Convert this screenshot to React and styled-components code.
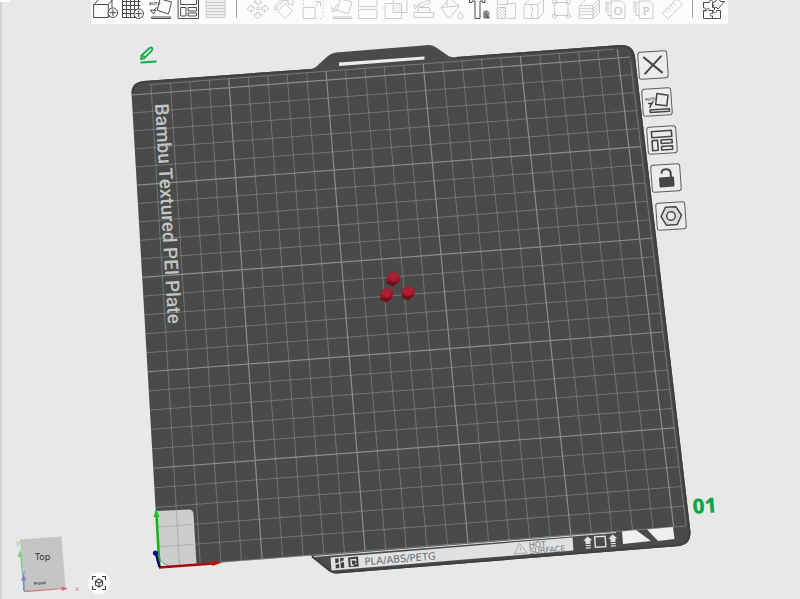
import React from "react";
import styled, { createGlobalStyle } from "styled-components";

const GlobalStyle = createGlobalStyle`
  body {
    margin: 0;
    background: #e8e8e8;
    font-family: "Noto Sans", sans-serif;
  }
`;

const Page = styled.main`
  display: flex;
  flex-direction: column;
  min-height: 100vh;
  box-shadow: inset 2px 0 #d2d2d2;
`;

const Header = styled.header`
  display: flex;
  justify-content: space-between;
  padding-right: 9%;
`;

const CornerTab = styled.div`
  width: 10px;
  height: 2px;
  border-radius: 0 0 3px 0;
  background: #fff;
`;

const Toolbar = styled.div`
  display: grid;
  grid-template-columns: 5fr auto 16fr auto 1fr;
  width: 87.5%;
  height: 24px;
  background: #fcfcfc;
`;

const ToolGroup = styled.div`
  display: flex;
`;

const ToolButton = styled.button`
  flex: 1;
  display: flex;
  justify-content: center;
  min-width: 0;
  height: 24px;
  padding: 0;
  border: 0;
  background: none;
  color: ${({ disabled }) => (disabled ? "#cbcbcb" : "#4c4c4c")};

  svg {
    flex: none;
    width: 26px;
    height: 24px;
  }
`;

const Separator = styled.div`
  width: 1px;
  height: 18px;
  margin: 0 7px;
  background: #a2a2a2;
`;

const Stage = styled.section`
  position: relative;
`;

const Scene = styled.svg`
  display: block;
  width: 100%;
`;

const FloatingButton = styled.button`
  position: absolute;
  left: ${({ $x }) => ($x / 800) * 100}%;
  top: ${({ $y }) => (($y - 24) / 575) * 100}%;
  width: ${({ $size }) => $size}px;
  height: ${({ $size }) => $size}px;
  display: flex;
  align-items: center;
  justify-content: center;
  padding: 0;
  border: 0;
  background: none;
  transform: translate(-50%, -50%);
`;

const PlateButton = styled(FloatingButton)`
  height: 28px;
  border: 1px solid #5a5c5b;
  border-radius: 3px;
  background: #ececec;
  color: #454746;
  transform: translate(-50%, -50%) rotate(-4deg);

  svg {
    flex: none;
    width: 26px;
    height: 24px;
  }
`;

const FitButton = styled(FloatingButton)`
  border-radius: 50%;
  background: #fff;
  color: #444;
`;

const Icon = ({ children, width = 1 }) => (
  <svg
    viewBox="0 0 26 24"
    fill="none"
    stroke="currentColor"
    strokeWidth={width}
    strokeLinejoin="round"
    strokeLinecap="round"
    aria-hidden="true"
  >
    {children}
  </svg>
);

const Plus = ({ x, y }) => (
  <>
    <circle cx={x} cy={y} r="4.8" fill="#fcfcfc" />
    <path d={`M${x - 3} ${y}h6M${x} ${y - 3}v6`} />
  </>
);

const ListIcon = ({ letter }) => (
  <Icon>
    <path d="M17 1H8v17.500h14V4.500L18.500 1z" />
    <path d="M8 3H5v12.500h3M5 2H3v10" />
    <text
      x="15"
      y="15"
      fontSize="12"
      textAnchor="middle"
      fontFamily="Liberation Serif, serif"
      strokeWidth="0.300"
      fill="currentColor"
    >
      {letter}
    </text>
  </Icon>
);

const fileTools = [
  {
    name: "Add",
    icon: (
      <Icon>
        <path d="M2 4.500h14.300v13H2zM2 4.500L7 -1M16.300 4.500L21 -1M16.300 17.500l1.500-1.500M20 0v7" />
        <Plus x={20.9} y={12.7} />
      </Icon>
    ),
  },
  {
    name: "Add plate",
    icon: (
      <Icon>
        <path d="M3.500-1v18.500M7.500-1v18.500M11.500-1v18.500M15.500-1v18.500M19.500-1v18.500M3.500 1.500h17.500M3.500 5.500h17.500M3.500 9.500h17.500M3.500 13.500h17.500M3.500 17.500h17.500" />
        <Plus x={19.7} y={13.7} />
      </Icon>
    ),
  },
  {
    name: "Auto orient",
    icon: (
      <Icon>
        <text x="2" y="5" fontSize="4" fontWeight="700" stroke="none" fill="currentColor">
          AUTO
        </text>
        <path d="M13.500-1l11 3-3 12-11-3.500zM3.500 10.500l3 3.500 2-3.500zM7 10l3-2.500M5 17h18.500v1.500H5z" />
      </Icon>
    ),
  },
  {
    name: "Arrange",
    icon: (
      <Icon>
        <path d="M3.500-3h20v21.500h-20zM6-1h15.500v5.500H6zM6 7.500h5v8.500H6zM13.500 7.500h8V11h-8zM13.500 13h8v3h-8z" />
      </Icon>
    ),
  },
  {
    name: "Layer height",
    disabled: true,
    icon: (
      <Icon>
        <path
          d="M4.500-1h18.500v18.500H4.500zM4.500 2.500H23M4.500 5.500H23M4.500 8.500H23M4.500 11.500H23M4.500 14.500H23"
          fill="#efefef"
        />
      </Icon>
    ),
  },
];

const modelTools = [
  {
    name: "Move",
    disabled: true,
    icon: (
      <Icon>
        <circle cx="13" cy="8.500" r="1.500" />
        <path d="M13-1.500l4 4h-2.500v2h-3v-2H9zM13 18.500l4-4h-2.500v-2h-3v2H9zM2.500 8.500l4-3.500v2h2.500v3H6.500v2zM23.500 8.500l-4-3.500v2H17v3h2.500v2z" />
      </Icon>
    ),
  },
  {
    name: "Rotate",
    disabled: true,
    icon: (
      <Icon>
        <path d="M13.500 4l7 6.500-7.500 8-7-7z" />
        <path d="M3 9.500C3 4 7 0 12 0l4 1M4.500 10c0-4 3-7 7.500-8M3 9.500h1.500M16-1.500V4l5 1V-1" />
      </Icon>
    ),
  },
  {
    name: "Scale",
    disabled: true,
    icon: (
      <Icon>
        <path d="M3.500 7.500H15v11H3.500zM15.500 6.500l4-4.500M16 1.500h4.500V6" />
        <path d="M3.500 5V0M23 0v18.500h-6" strokeDasharray="1 3" />
      </Icon>
    ),
  },
  {
    name: "Lay on face",
    disabled: true,
    icon: (
      <Icon>
        <path d="M13-1l11 3-3.500 11.500L9.500 10.500zM3.500 8l1 4 4-2zM6 9l3-4M5.500 17H24v1.500H5.500z" />
      </Icon>
    ),
  },
  {
    name: "Cut",
    disabled: true,
    icon: (
      <Icon>
        <path d="M4-2h18v8.500H4zM4 9.500h18v9H4z" />
      </Icon>
    ),
  },
  {
    name: "Mesh boolean",
    disabled: true,
    icon: (
      <Icon>
        <path d="M2.500 3.500h16v15h-16zM10.500-2H24v14.500H10.500z" />
        <path d="M10.500 7l4-3.500M10.500 10l7-6.500M11.500 12l7-6.500M14.500 12l4-3.500" strokeWidth="0.700" />
      </Icon>
    ),
  },
  {
    name: "Supports",
    disabled: true,
    icon: (
      <Icon>
        <path d="M4.500 12.500h19v5h-19zM9 7.500h10l1.500 5H7.500zM9 4l10-4 1 2.500-9 4.500zM4 5l1 4 3-3z" />
      </Icon>
    ),
  },
  {
    name: "Color painting",
    disabled: true,
    icon: (
      <Icon>
        <path d="M3.500 7.500L12-2l9 8-8.500 11c-1 1-2 1-3 0zM3.500 7.500L21 6M9-1v7M22.500 11.500c-1.500 2.500-2.500 3.500-2.500 5a2.500 2.500 0 005 0c0-1.500-1-2.500-2.500-5z" />
      </Icon>
    ),
  },
  {
    name: "Text shape",
    icon: (
      <Icon>
        <path d="M3.500-2v4.500h2.500V1h3v17.500h5V1h2.500v1.500H19V-2" />
        <text
          x="17"
          y="18"
          fontSize="12"
          fontWeight="700"
          fontFamily="Roboto, sans-serif"
          strokeWidth="0.800"
        >
          a
        </text>
      </Icon>
    ),
  },
  {
    name: "Variable layer",
    disabled: true,
    icon: (
      <Icon>
        <path d="M4.500 7.500h8v11h-8zM4.500 4.500V-1M14.500 3.500h8v15h-8M14.500 3.500V-1M4.500 4.500h10" />
        <path
          d="M4.500 9.500l2-2M4.500 12.500l5-5M4.500 15.500l8-8M5 18l7.500-7.500M8 18l4.500-4.500M11 18l1.500-1.500"
          strokeWidth="0.800"
        />
      </Icon>
    ),
  },
  {
    name: "Split to objects",
    disabled: true,
    icon: (
      <Icon>
        <path d="M3.500 4.500H17v14H3.500zM3.500 4.500L9-1M17 4.500L22.500-1M17 18.500l5.500-6V-1M11 4.500c-2 3 2 4 0 7s1 4-1 7" />
      </Icon>
    ),
  },
  {
    name: "Split to parts",
    disabled: true,
    icon: (
      <Icon>
        <path d="M7 2.500h13v13H7z" />
        <circle cx="6.500" cy="2" r="2.200" />
        <circle cx="20.500" cy="2" r="2.200" />
        <circle cx="6.500" cy="16" r="2.200" />
        <circle cx="20.500" cy="16" r="2.200" />
      </Icon>
    ),
  },
  {
    name: "Slice view",
    disabled: true,
    icon: (
      <Icon>
        <path d="M3.500 5.500H17v13H3.500zM3.500 5.500L10-1M17 5.500l6.500-6M17 18.500l6.500-6V-1M17 9l6.500-6M17 12l6.500-6M17 15l6.500-6" />
        <path d="M3.500 9l2-1 2 1 2-1 2 1 2-1 3.500 1M3.500 12l2-1 2 1 2-1 2 1 2-1 3.500 1M3.500 15l2-1 2 1 2-1 2 1 2-1 3.500 1" />
      </Icon>
    ),
  },
  { name: "Object list", disabled: true, icon: <ListIcon letter="O" /> },
  { name: "Part list", disabled: true, icon: <ListIcon letter="P" /> },
  {
    name: "Measure",
    disabled: true,
    icon: (
      <Icon>
        <path d="M3.500 13L18-1l5.500 5.500L9 18.500zM6.500 10.500l2 2M9 8l3 3M11.500 5.500l2 2M14 3l3 3" />
      </Icon>
    ),
  },
];

const assemblyTools = [
  {
    name: "Assembly view",
    icon: (
      <Icon>
        <path d="M2.500 2.500h6c-1-3 4-3 3 0h0v5c3-1 3 4 0 3M2.500 2.500v5.500c3-1 3 4 0 3v7.500h17v-8h-4c1 3-4 3-3.500 0H8c1-3-3-3-2.500 0h-3M11.500 11v2.500c-3-1-3 3.500 0 2.500v2.500M12 3l5-4M17-1l3 2.500M20 1.500l3.500 0-6.500 7.500-2-2c-2 1.500-4-1-2-2.500" />
      </Icon>
    ),
  },
];

const plateTools = [
  {
    name: "Delete plate",
    x: 653,
    y: 65,
    icon: (
      <Icon width={2}>
        <path d="M4.500 4l17 16M21.500 4l-17 16" />
      </Icon>
    ),
  },
  {
    name: "Auto orient plate",
    x: 657,
    y: 102,
    icon: (
      <Icon width={1.5}>
        <text x="1" y="10" fontSize="4" fontWeight="700" stroke="none" fill="currentColor">
          AUTO
        </text>
        <path d="M13.500 3.500l11 2.500-2 10.500-11-2zM4.500 13h3l-2 4M6 15.500L9 11.500M5.500 19.500H25V22H5.500z" />
      </Icon>
    ),
  },
  {
    name: "Arrange plate",
    x: 662,
    y: 140,
    icon: (
      <Icon width={1.6}>
        <path d="M3 3h20v6H3zM3 12h5.500v10H3zM12 12h11v3.500H12zM12 18.500h11V22H12z" />
      </Icon>
    ),
  },
  {
    name: "Lock plate",
    x: 666,
    y: 178,
    icon: (
      <Icon width={2}>
        <path d="M9 6.500c0-4 8-4.500 9 0v5" />
        <path d="M7 12h13v8H7z" fill="currentColor" />
      </Icon>
    ),
  },
  {
    name: "Plate settings",
    x: 671,
    y: 216,
    icon: (
      <Icon width={1.5}>
        <path d="M8 3h10.500l5 9-5 9H8l-5-9z" fill="#dcdcdc" />
        <circle cx="13" cy="12" r="4.300" fill="#ececec" />
      </Icon>
    ),
  },
];

// screen positions of the plate corners at (0,0), (256,0), (256,250), (0,250) mm
const corners = [
  [159, 567],
  [686, 526],
  [630, 57],
  [132, 95],
];

const project = (() => {
  const [[x0, y0], [x1, y1], [x2, y2], [x3, y3]] = corners;
  const dx1 = x1 - x2;
  const dx2 = x3 - x2;
  const dy1 = y1 - y2;
  const dy2 = y3 - y2;
  const sx = x0 - x1 + x2 - x3;
  const sy = y0 - y1 + y2 - y3;
  const det = dx1 * dy2 - dx2 * dy1;
  const g = (sx * dy2 - dx2 * sy) / det;
  const h = (dx1 * sy - sx * dy1) / det;
  return (mx, my) => {
    const u = mx / 256;
    const v = my / 250;
    const w = g * u + h * v + 1;
    return [
      ((x1 - x0 + g * x1) * u + (x3 - x0 + h * x3) * v + x0) / w,
      ((y1 - y0 + g * y1) * u + (y3 - y0 + h * y3) * v + y0) / w,
    ];
  };
})();

const segment = (ax, ay, bx, by) =>
  "M" + project(ax, ay).join(" ") + "L" + project(bx, by).join(" ");

const steps = Array.from({ length: 26 }, (_, i) => i * 10);
const isBold = (mm) => mm % 50 === 0;
const gridPath = (bold) =>
  steps
    .filter((mm) => mm > 0 && isBold(mm) === bold)
    .map((mm) => segment(mm, 0, mm, 255) + segment(0, mm, 256, mm))
    .join("");

const Grid = () => (
  <g fill="none" stroke="#a8abaa">
    <path d={gridPath(false)} strokeWidth="0.800" opacity="0.550" />
    <path d={gridPath(true)} strokeWidth="1.200" opacity="0.700" />
    <path
      d={segment(9, 255, 248, 255) + segment(256, 248, 256, 0) + segment(256, 0, 0, 0)}
      strokeWidth="0.800"
      opacity="0.600"
    />
  </g>
);

const Plate = () => (
  <g>
    <path
      d="M131.500 93Q131.500 82 144 81L311 69Q316 68 319 64L328 56Q331 53 336 52.500L429 45Q433 45 437 48L447 55Q451 58 456 57L620 45Q633 44 635 56L690.500 532Q691 544 680 546L337 573.500Q333 574 329 571L311 555.500L159 567.500Z"
      fill="#494b4a"
    />
    <path
      d="M132.500 93Q132.500 83 144 82L311 70M456 58L620 46Q632 45 634 57L689.500 532Q690 543 680 545L337 572.500Q333 573 329 570L312 556.500"
      fill="none"
      stroke="#3f4140"
      strokeWidth="2"
    />
    <path d="M339 62.500L424.500 56.500V59.500L339 66Z" fill="#ececec" />
  </g>
);

const CornerPatch = () => (
  <g>
    <path
      d="M156.500 511L189 509.500Q193 509.500 193.500 514L196.500 564L170 566Q161 564 159 557Z"
      fill="#cccdcd"
    />
    <path
      d={segment(10, 0, 10, 28) + segment(0, 10, 17, 10) + segment(0, 20, 17, 20)}
      stroke="#a6a8a8"
      strokeWidth="0.800"
    />
    <path d="M159 557Q161 564 170 566L159 567Z" fill="#e8e8e8" />
    <path d="M159 557Q161 564 170 566" fill="none" stroke="#8c8e8d" />
  </g>
);

const PlateLabel = () => (
  <text
    transform="translate(155 104) rotate(86.600)"
    fontFamily="Roboto, sans-serif"
    fontSize="19"
    fontWeight="500"
    fill="#c2c4c3"
  >
    Bambu Textured PEI Plate
  </text>
);

const UpArrow = ({ x, y }) => (
  <path
    transform={`translate(${x} ${y}) rotate(-4)`}
    d="M0-6L4.500-2H2.500V1.500h-5V-2h-2zM-2.500 2.500h5v1.200h-5zM-2.500 4.800h5V6h-5z"
    fill="#e4e6e6"
  />
);

const FrontStrip = () => (
  <g>
    <path d="M314 556.500L616 532.500" stroke="#dcdedd" strokeWidth="1" />
    <path d="M330.500 557.500L572.500 537.500L573.500 550.500L331.500 570.500Z" fill="#dfe1e2" />
    <g transform="translate(334 557.500) rotate(-4.500)">
      <path
        d="M1 1h3.500v4L1 6zM6 1h3.500v2.500L6 5zM1 7.500l3.500-1V11H1zM6 6l3.500-1v6H6z"
        fill="#3f4140"
      />
      <path d="M14 1h10v10H14z" fill="#3f4140" />
      <path d="M16 3h6v2.500h-1.500v-1H17.500v4H19V10h-3z" fill="#dfe1e2" />
      <path d="M20.500 7h1.500v1.500h-1.500z" fill="#dfe1e2" />
      <text x="30" y="10" fontFamily="DejaVu Sans, sans-serif" fontSize="10" fill="#696b6c">
        PLA/ABS/PETG
      </text>
      <path d="M180 10.500l6-10 7 10zM186.500 4v4" fill="none" stroke="#a0a2a3" strokeWidth="0.800" />
    </g>
    <g
      transform="translate(529 549) rotate(-4.500)"
      fontFamily="DejaVu Sans, sans-serif"
      fontSize="8"
      fill="#77797a"
    >
      <text x="0" y="-1">
        HOT
      </text>
      <text x="0" y="5">
        SURFACE
      </text>
    </g>
    <UpArrow x={588} y={542.5} />
    <path
      d="M-5-5.500H5.500V5H-5z"
      transform="translate(600 542) rotate(-4)"
      fill="none"
      stroke="#e4e6e6"
      strokeWidth="1.400"
    />
    <UpArrow x={613} y={540.5} />
    <path d="M622 531.500L636 530L651 541L623 544ZM647 529.500L673 527L674.500 539L658 541Z" fill="#f0f0f0" />
  </g>
);

const OriginAxes = () => (
  <g strokeWidth="2.500">
    <path d="M159.500 567L156.500 516" stroke="#12b41a" />
    <path d="M156 509l3.500 8h-6z" fill="#12c41c" />
    <path d="M159 567.500L213 563.500" stroke="#a80d0d" />
    <path d="M222 562.500l-9.500 3.500-.5-5.500z" fill="#c01010" />
    <path d="M159.500 567L156 554" stroke="#0a0a66" />
    <circle cx="155.500" cy="553" r="2.600" fill="#0a0a88" />
  </g>
);

const Gem = ({ x, y }) => (
  <g transform={`translate(${x} ${y})`}>
    <path d="M0-7.500L6.500-4L6.500 2.500L0 7.500L-6 4L-6.500-3Z" fill="#981828" />
    <path d="M0-7L6-4L1 3L-6.500-2Z" fill="#ae1e32" />
    <path d="M-6.500 2L1 3L6.500 2L0 7.500L-6 5Z" fill="#6f111d" />
  </g>
);

const ViewCube = () => (
  <g>
    <path d="M20 539.500L61.500 536.500L65.500 588L24 592Z" fill="#c5c5c5" />
    <text x="35" y="560" fontFamily="Noto Sans, sans-serif" fontSize="9" fill="#333">
      Top
    </text>
    <text
      transform="translate(34 585) rotate(-4)"
      fontSize="4"
      fontWeight="700"
      fontFamily="DejaVu Sans, sans-serif"
      fill="#444"
    >
      Front
    </text>
    <g strokeWidth="1.300">
      <path d="M24 591L20.700 556" stroke="#7fce86" />
      <path d="M20 550l3 7h-5.500z" fill="#7fce86" />
      <path d="M24 591.500L62 588.700" stroke="#d08286" />
      <path d="M68 588.500l-6 2.500-.5-4.500z" fill="#c86f74" />
      <path d="M24 591L23.800 580" stroke="#7d80d0" />
      <path d="M23.500 574l2.700 6.500h-5z" fill="#7d80d0" />
    </g>
    <g fontFamily="DejaVu Sans, sans-serif" fontSize="7">
      <text x="16" y="545" fill="#7fce86">
        y
      </text>
      <text x="22" y="575" fill="#8f92d6">
        z
      </text>
      <text x="75" y="591" fill="#d08286">
        x
      </text>
    </g>
  </g>
);

const Tools = ({ items }) => (
  <ToolGroup>
    {items.map((item) => (
      <ToolButton key={item.name} disabled={item.disabled} aria-label={item.name}>
        {item.icon}
      </ToolButton>
    ))}
  </ToolGroup>
);

const App = () => (
  <>
    <GlobalStyle />
    <Page>
      <Header>
        <CornerTab />
        <Toolbar role="toolbar" aria-label="Model tools">
          <Tools items={fileTools} />
          <Separator />
          <Tools items={modelTools} />
          <Separator />
          <Tools items={assemblyTools} />
        </Toolbar>
      </Header>
      <Stage>
        <Scene viewBox="0 24 800 575" role="img" aria-label="Build plate">
          <Plate />
          <Grid />
          <CornerPatch />
          <PlateLabel />
          <FrontStrip />
          <OriginAxes />
          <Gem x={393} y={279} />
          <Gem x={386.5} y={295} />
          <Gem x={408} y={293} />
          <text
            transform="translate(693 514) rotate(-4)"
            fontFamily="Noto Sans, sans-serif"
            fontSize="21"
            fontWeight="800"
            fill="#0aa544"
          >
            01
          </text>
          <ViewCube />
        </Scene>
        <FloatingButton $x={148} $y={55} $size={20} aria-label="Edit plate name">
          <svg width="20" height="20" fill="none" stroke="#14ad4c" strokeWidth="1.800">
            <path d="M3 14l.5-3.500 8-7.500q1.500-1 2.500 0t0 2.500l-8 8zM4.500 10.500l2.500 2" />
            <path d="M2.500 17.500l16-1" />
          </svg>
        </FloatingButton>
        {plateTools.map((item) => (
          <PlateButton
            key={item.name}
            $x={item.x}
            $y={item.y}
            $size={30}
            aria-label={item.name}
          >
            {item.icon}
          </PlateButton>
        ))}
        <FitButton $x={99} $y={583} $size={22} aria-label="Fit view">
          <svg width="16" height="16" fill="none" stroke="currentColor" strokeWidth="1.200">
            <path d="M1.500 5V1.500H5M11 1.500h3.500V5M14.500 11v3.500H11M5 14.500H1.500V11" />
            <path d="M8 4l3.500 2v4L8 12l-3.500-2V6zM4.500 6L8 8l3.500-2M8 8v4" />
          </svg>
        </FitButton>
      </Stage>
    </Page>
  </>
);

export default App;
